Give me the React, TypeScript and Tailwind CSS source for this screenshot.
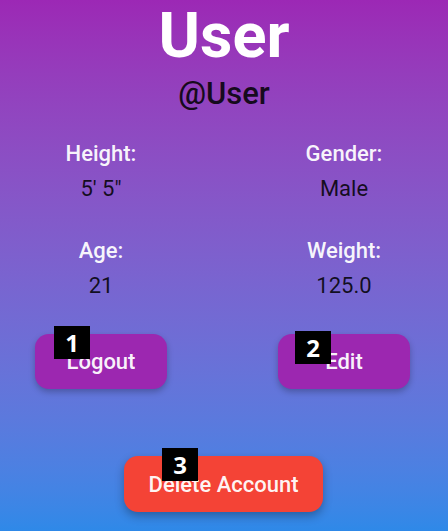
import React from 'react';

const stats = [
  { label: 'Height:', value: '5\' 5"' },
  { label: 'Gender:', value: 'Male' },
  { label: 'Age:', value: '21' },
  { label: 'Weight:', value: '125.0' },
];

function Badge({ n, className }: { n: number; className: string }) {
  return (
    <span
      className={`absolute flex h-[33px] w-[36px] items-center justify-center bg-black text-[24px] font-bold leading-none text-white ${className}`}
      style={{ fontFamily: '"Open Sans", sans-serif' }}
    >
      {n}
    </span>
  );
}

export default function App() {
  return (
    <div
      className="flex h-[531px] w-[448px] flex-col overflow-hidden bg-gradient-to-b from-[#9c28b5] to-[#2e89e8]"
      style={{ fontFamily: 'Roboto, "Noto Sans", sans-serif' }}
    >
      <div className="flex flex-col items-center">
        <h1 className="mt-[4px] text-[63px] font-bold leading-[63px] text-white">User</h1>
        <p className="mt-[9px] text-[31px] font-medium leading-[36px] text-black/85">@User</p>
      </div>

      <div className="mt-[29px] grid grid-cols-2 gap-y-[36px] pl-[35px] pr-[38px]">
        {stats.map((s, i) => (
          <div
            key={s.label}
            className={`flex w-[132px] flex-col items-center ${i % 2 === 1 ? 'justify-self-end' : ''}`}
          >
            <span className="text-[22px] font-medium leading-[26px] text-white/95">{s.label}</span>
            <span className="mt-[9px] text-[22px] leading-[26px] text-black/85">{s.value}</span>
          </div>
        ))}
      </div>

      <div className="mt-[35px] flex justify-between pl-[35px] pr-[38px]">
        <div className="relative">
          <button className="h-[55px] w-[132px] rounded-[14px] bg-[#9c27b0] text-[22px] font-medium text-white/95 shadow-[0_3px_6px_rgba(0,0,0,0.25)]">
            Logout
          </button>
          <Badge n={1} className="left-[19px] top-[-8px]" />
        </div>
        <div className="relative">
          <button className="h-[55px] w-[132px] rounded-[14px] bg-[#9c27b0] text-[22px] font-medium text-white/95 shadow-[0_3px_6px_rgba(0,0,0,0.25)]">
            Edit
          </button>
          <Badge n={2} className="left-[17px] top-[-3px]" />
        </div>
      </div>

      <div className="mt-[67px] flex justify-center pr-[1px]">
        <div className="relative">
          <button className="h-[56px] w-[199px] rounded-[14px] bg-[#f44336] text-[22px] font-medium text-white/95 shadow-[0_4px_10px_rgba(0,0,0,0.3)]">
            Delete Account
          </button>
          <Badge n={3} className="left-[38px] top-[-8px]" />
        </div>
      </div>
    </div>
  );
}
